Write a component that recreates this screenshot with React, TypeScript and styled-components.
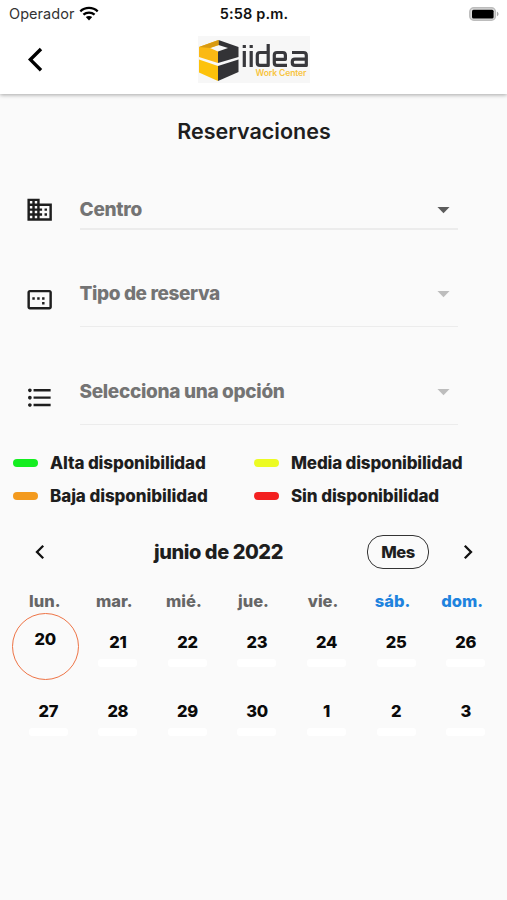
import React from "react";
import styled, { createGlobalStyle } from "styled-components";
import {
  MdDomain,
  MdOutlineImageAspectRatio,
  MdFormatListBulleted,
  MdArrowDropDown,
} from "react-icons/md";

const GlobalStyle = createGlobalStyle`
  * { box-sizing: border-box; }
  body { margin: 0; background: #fafafa; }
`;

const Screen = styled.div`
  width: 507px;
  height: 900px;
  overflow: hidden;
  background: #fafafa;
  color: #1e1e1e;
  font-family: Inter, "Liberation Sans", sans-serif;
  font-weight: 800;
  white-space: nowrap;
`;

const Header = styled.header`
  height: 94px;
  background: #fff;
  box-shadow: 0 1px 4px rgba(0, 0, 0, 0.34);
`;

const StatusBar = styled.div`
  display: grid;
  grid-template-columns: 1fr auto 1fr;
  align-items: center;
  height: 27px;
  padding: 0 8px 0 9px;
  font-size: 14.5px;
`;

const Carrier = styled.div`
  display: flex;
  align-items: center;
  gap: 5px;
  height: 26px;
  color: #333;
  font-weight: 400;
  letter-spacing: 0.05px;
`;

const Clock = styled.div`
  color: #111;
  font-weight: 600;
  letter-spacing: 0.15px;
`;

const BatterySlot = styled.div`
  display: flex;
  justify-content: flex-end;
  height: 14px;
`;

const NavBar = styled.div`
  display: grid;
  grid-template-columns: 1fr auto 1fr;
  align-items: center;
  height: 65px;
  padding-left: 26px;
`;

const BackButton = styled.button`
  display: flex;
  width: 20px;
  height: 26px;
  padding: 0;
  border: 0;
  background: none;
`;

const LogoSlot = styled.div`
  height: 47px;
  margin-right: 26px;
  background: #f7f7f7;
`;

const Title = styled.h1`
  margin: 22px 0 0 1px;
  text-align: center;
  font-size: 21.5px;
  line-height: 30px;
  font-weight: 600;
`;

const Form = styled.div`
  padding: 42px 49px 0 25px;
`;

const Field = styled.div<{ $height: number }>`
  display: grid;
  grid-template-columns: 54.5px 1fr;
  height: ${(p) => p.$height}px;
`;

const FieldIcon = styled.div`
  padding-top: 7px;
  font-size: 29.3px;
  line-height: 0;
`;

const Select = styled.div<{
  $height: number;
  $top: number;
  $line: number;
  $spacing: number;
}>`
  display: flex;
  align-items: flex-start;
  justify-content: space-between;
  height: ${(p) => p.$height}px;
  padding-top: ${(p) => p.$top}px;
  border-bottom: ${(p) => p.$line}px solid #ececec;
  color: #747474;
  font-size: 19px;
  line-height: 30px;
  letter-spacing: ${(p) => p.$spacing}px;
`;

const Caret = styled.span<{ $enabled?: boolean }>`
  display: flex;
  color: ${(p) => (p.$enabled ? "#5c5c5c" : "#bdbdbd")};
  font-size: 29px;
`;

const Legend = styled.div`
  display: grid;
  grid-template-columns: 241px 1fr;
  grid-auto-rows: 33px;
  align-items: center;
  padding-left: 13px;
  font-size: 17px;
`;

const LegendItem = styled.div<{ $spacing: number }>`
  display: flex;
  align-items: center;
  gap: 12px;
  letter-spacing: ${(p) => p.$spacing}px;
`;

const Swatch = styled.span<{ $color: string }>`
  width: 25px;
  height: 8px;
  border-radius: 4px;
  background: ${(p) => p.$color};
`;

const CalendarBar = styled.div`
  display: grid;
  grid-template-columns: 79px 279px 71px 78px;
  align-items: center;
  justify-items: center;
  height: 34px;
  margin-top: 23px;
`;

const Month = styled.div`
  font-size: 20px;
  letter-spacing: -0.45px;
`;

const ModeButton = styled.button`
  width: 62px;
  height: 34px;
  margin-left: 9px;
  padding: 0;
  border: 1.5px solid #333;
  border-radius: 16px;
  background: transparent;
  color: #1e1e1e;
  font: 800 16.5px Inter, sans-serif;
  letter-spacing: -0.4px;
`;

const ArrowButton = styled.button`
  display: flex;
  padding: 0;
  border: 0;
  background: none;
`;

const Week = styled.div`
  display: grid;
  grid-template-columns: repeat(7, 69.57px);
  margin-left: 10px;
`;

const WeekNames = styled(Week)`
  height: 22px;
  margin-top: 21px;
`;

const WeekName = styled.div<{ $weekend?: boolean }>`
  text-align: center;
  font-size: 16.5px;
  line-height: 22px;
  color: ${(p) => (p.$weekend ? "#1e83de" : "#666")};
`;

const DayCell = styled.div<{ $today?: boolean }>`
  display: flex;
  flex-direction: column;
  align-items: center;
  height: 69.4px;
  padding: ${(p) => (p.$today ? "0" : "20px 0 0 7px")};
  color: #0a0a0a;
  font-size: 16.5px;
  line-height: 20px;
  letter-spacing: -0.3px;
`;

const Today = styled.div`
  display: flex;
  flex-direction: column;
  align-items: center;
  width: 67px;
  height: 67px;
  margin: 1px 0 0 1px;
  padding-top: 15px;
  border: 1.4px solid #ee7446;
  border-radius: 50%;
`;

const Availability = styled.span`
  width: 39px;
  height: 8px;
  margin-top: 7px;
  border-radius: 3px;
  background: #fff;
`;

function Wifi() {
  return (
    <svg width="20" height="15" viewBox="0 0 20 15" fill="none" stroke="#000" strokeWidth="2.3">
      <path d="M1.3 5.4C6.2 .8 13.8 .8 18.7 5.4" />
      <path d="M4.4 8.7C7.6 5.9 12.4 5.9 15.6 8.7" />
      <path d="M6.8 11.1C8.7 9.6 11.3 9.6 13.2 11.1L10 14.4Z" fill="#000" stroke="none" />
    </svg>
  );
}

function Battery() {
  return (
    <svg width="31" height="14" viewBox="0 0 31 14">
      <rect x="1.8" y=".8" width="25.6" height="12.4" rx="4" fill="#ddd" stroke="#bcbcbc" strokeWidth="1.5" />
      <rect x="4" y="2.8" width="21.6" height="8.6" rx="1.5" fill="#000" />
      <path d="M29 4.8c2 .7 2 3.7 0 4.4z" fill="#aaa" />
    </svg>
  );
}

function Logo() {
  return (
    <svg width="112" height="47" viewBox="0 0 112 47">
      <path d="M1 11L20.5 4 21 9 12 12 20 15.5V27L1 21Z" fill="#fbb914" />
      <path d="M20.5 4L40.5 11V21L20 27V15.5L30 12 20.5 9Z" fill="#333336" />
      <path d="M1 11L20.5 4V9L12 12Z" fill="#d89a12" />
      <path d="M1 23.5L20 30V45L1 36.5Z" fill="#fdc20b" />
      <path d="M20 30L40.5 23.5V36L20 45Z" fill="#333336" />
      <g fill="none" stroke="#38383c" strokeWidth="3.2" strokeLinejoin="round">
        <path d="M46.3 15V31M46.3 9V12M53.2 15V31M53.2 9V12" />
        <path d="M70.2 8V29.4H62Q59.3 29.4 59.3 26.7V19.2Q59.3 16.5 62 16.5H70.2" />
        <path d="M89 29.4H79Q76.3 29.4 76.3 26.7V19.2Q76.3 16.5 79 16.5H84.7Q87.4 16.5 87.4 19.2V23.3H76.3" />
        <path d="M94 16.5H105.4Q108.3 16.5 108.3 19.2V29.4H97Q94.3 29.4 94.3 26.7V25.8Q94.3 23.1 97 23.1H108.3" />
      </g>
      <text x="57.5" y="40" textLength="51" fontFamily="Inter, sans-serif" fontSize="8.6" fontWeight="600" fill="#f8c440">
        Work Center
      </text>
    </svg>
  );
}

function Chevron({ flip }: { flip?: boolean }) {
  return (
    <svg width="10" height="16" viewBox="0 0 10 16" fill="none" stroke="#111" strokeWidth="2.3">
      <path d={flip ? "M1.8 1.8L8 8 1.8 14.2" : "M8.2 1.8L2 8 8.2 14.2"} />
    </svg>
  );
}

const legend = [
  { color: "#14ee20", label: "Alta disponibilidad", spacing: -0.11 },
  { color: "#ecfb23", label: "Media disponibilidad", spacing: -0.18 },
  { color: "#f39a1e", label: "Baja disponibilidad", spacing: -0.08 },
  { color: "#f32020", label: "Sin disponibilidad", spacing: -0.1 },
];

const weekdays = ["lun.", "mar.", "mié.", "jue.", "vie.", "sáb.", "dom."];
const days = [20, 21, 22, 23, 24, 25, 26, 27, 28, 29, 30, 1, 2, 3];

export default function App() {
  return (
    <Screen>
      <GlobalStyle />
      <Header>
        <StatusBar>
          <Carrier>
            Operador <Wifi />
          </Carrier>
          <Clock>5:58 p.m.</Clock>
          <BatterySlot>
            <Battery />
          </BatterySlot>
        </StatusBar>
        <NavBar>
          <BackButton aria-label="Volver">
            <svg width="20" height="26" viewBox="0 0 20 26" fill="none" stroke="#000" strokeWidth="3.4">
              <path d="M15 2L4.4 12.6 15 23.2" />
            </svg>
          </BackButton>
          <LogoSlot>
            <Logo />
          </LogoSlot>
        </NavBar>
      </Header>
      <Title>Reservaciones</Title>
      <Form>
        <Field $height={90}>
          <FieldIcon>
            <MdDomain />
          </FieldIcon>
          <Select $height={42} $top={7} $line={2} $spacing={-0.25}>
            <span>Centro</span>
            <Caret $enabled>
              <MdArrowDropDown />
            </Caret>
          </Select>
        </Field>
        <Field $height={98}>
          <FieldIcon>
            <MdOutlineImageAspectRatio />
          </FieldIcon>
          <Select $height={49} $top={0.6} $line={1.5} $spacing={-0.38}>
            <span>Tipo de reserva</span>
            <Caret>
              <MdArrowDropDown />
            </Caret>
          </Select>
        </Field>
        <Field $height={70}>
          <FieldIcon>
            <MdFormatListBulleted />
          </FieldIcon>
          <Select $height={49} $top={0.6} $line={1.5} $spacing={-0.32}>
            <span>Selecciona una opción</span>
            <Caret>
              <MdArrowDropDown />
            </Caret>
          </Select>
        </Field>
      </Form>
      <Legend>
        {legend.map((item) => (
          <LegendItem key={item.label} $spacing={item.spacing}>
            <Swatch $color={item.color} />
            {item.label}
          </LegendItem>
        ))}
      </Legend>
      <CalendarBar>
        <ArrowButton aria-label="Anterior">
          <Chevron />
        </ArrowButton>
        <Month>junio de 2022</Month>
        <ModeButton>Mes</ModeButton>
        <ArrowButton aria-label="Siguiente">
          <Chevron flip />
        </ArrowButton>
      </CalendarBar>
      <WeekNames>
        {weekdays.map((name, i) => (
          <WeekName key={name} $weekend={i > 4}>
            {name}
          </WeekName>
        ))}
      </WeekNames>
      <Week>
        {days.map((day, i) => (
          <DayCell key={day} $today={i === 0}>
            {i === 0 ? (
              <Today>{day}</Today>
            ) : (
              <>
                {day}
                <Availability />
              </>
            )}
          </DayCell>
        ))}
      </Week>
    </Screen>
  );
}
